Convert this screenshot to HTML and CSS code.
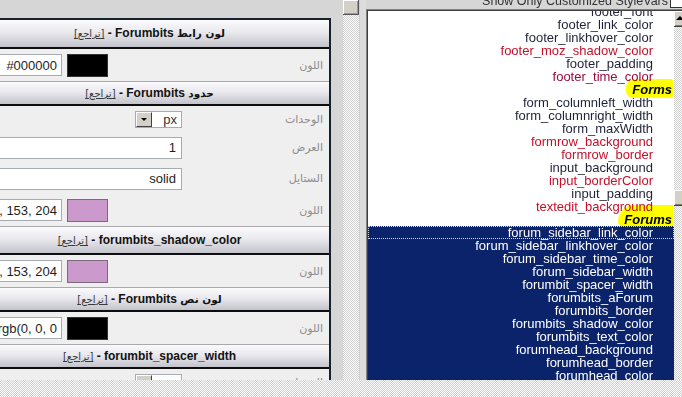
FILE: index.html
```html
<!DOCTYPE html>
<html lang="ar">
<head>
<meta charset="utf-8">
<title>StyleVars</title>
<link rel="stylesheet" href="styles.css">
</head>
<body>
<div class="frames">
  <div class="left">
    <div class="panel" dir="rtl">
      <div class="hdr hdr-tall hdr-first"><span class="ttl"><span class="ar">لون رابط</span> Forumbits</span> - <a class="undo">[تراجع]</a></div>
      <div class="row row-color">
        <div class="lbl">اللون</div>
        <div class="val val-color"><span class="swatch sw-black"></span><span class="inp inp-color"><span>#000000</span></span></div>
      </div>

      <div class="hdr"><span class="ttl"><span class="ar">حدود</span> Forumbits</span> - <a class="undo">[تراجع]</a></div>
      <div class="row row-units">
        <div class="lbl">الوحدات</div>
        <div class="val"><span class="sel"><span class="sel-btn"><span class="tri"></span></span><span class="sel-txt">px</span></span></div>
      </div>
      <div class="row row-text">
        <div class="lbl">العرض</div>
        <div class="val"><span class="inp inp-wide"><span>1</span></span></div>
      </div>
      <div class="row row-text">
        <div class="lbl">الستايل</div>
        <div class="val"><span class="inp inp-wide"><span>solid</span></span></div>
      </div>
      <div class="row row-color">
        <div class="lbl">اللون</div>
        <div class="val val-color"><span class="swatch sw-pink"></span><span class="inp inp-color"><span>rgb(204, 153, 204</span></span></div>
      </div>

      <div class="hdr hdr-tall"><span class="ttl">forumbits_shadow_color</span> - <a class="undo">[تراجع]</a></div>
      <div class="row row-color">
        <div class="lbl">اللون</div>
        <div class="val val-color"><span class="swatch sw-pink"></span><span class="inp inp-color"><span>rgb(204, 153, 204</span></span></div>
      </div>

      <div class="hdr"><span class="ttl"><span class="ar">لون نص</span> Forumbits</span> - <a class="undo">[تراجع]</a></div>
      <div class="row row-color">
        <div class="lbl">اللون</div>
        <div class="val val-color"><span class="swatch sw-black"></span><span class="inp inp-color"><span>rgb(0, 0, 0</span></span></div>
      </div>

      <div class="hdr"><span class="ttl">forumbit_spacer_width</span> - <a class="undo">[تراجع]</a></div>
      <div class="row row-units">
        <div class="lbl">الوحدات</div>
        <div class="val"><span class="sel"><span class="sel-btn"><span class="tri"></span></span><span class="sel-txt">px</span></span></div>
      </div>
    </div>
  </div>

  <div class="vscroll"><div class="thumb"></div></div>
  <div class="sep"></div>

  <div class="right">
    <div class="caption"><span class="cap-txt">Show Only Customized StyleVars</span><span class="chk"></span></div>
    <div class="listbox">
      <div class="opts">
        <div class="scroller">
          <div class="opt">footer_font</div>
          <div class="opt">footer_link_color</div>
          <div class="opt">footer_linkhover_color</div>
          <div class="opt red">footer_moz_shadow_color</div>
          <div class="opt">footer_padding</div>
          <div class="opt maroon">footer_time_color</div>
          <div class="grp"><span class="hl hl-forms">Forms</span></div>
          <div class="opt">form_columnleft_width</div>
          <div class="opt">form_columnright_width</div>
          <div class="opt">form_maxWidth</div>
          <div class="opt red">formrow_background</div>
          <div class="opt red">formrow_border</div>
          <div class="opt">input_background</div>
          <div class="opt red">input_borderColor</div>
          <div class="opt">input_padding</div>
          <div class="opt red">textedit_background</div>
          <div class="grp"><span class="hl hl-forums">Forums</span></div>
          <div class="opt sel-opt focus">forum_sidebar_link_color</div>
          <div class="opt sel-opt">forum_sidebar_linkhover_color</div>
          <div class="opt sel-opt">forum_sidebar_time_color</div>
          <div class="opt sel-opt">forum_sidebar_width</div>
          <div class="opt sel-opt">forumbit_spacer_width</div>
          <div class="opt sel-opt">forumbits_aForum</div>
          <div class="opt sel-opt">forumbits_border</div>
          <div class="opt sel-opt">forumbits_shadow_color</div>
          <div class="opt sel-opt">forumbits_text_color</div>
          <div class="opt sel-opt">forumhead_background</div>
          <div class="opt sel-opt">forumhead_border</div>
          <div class="opt sel-opt">forumhead_color</div>
          <div class="opt sel-opt">forumhead_font</div>
        </div>
      </div>
      <div class="lsb">
        <div class="sb-btn"><span class="tri-up"></span></div>
        <div class="sb-gap"></div>
        <div class="sb-thumb"></div>
      </div>
    </div>
  </div>
</div>
</body>
</html>
```

FILE: styles.css
```css
* { box-sizing: border-box; }

html, body {
  margin: 0;
  height: 100%;
}

body {
  overflow: hidden;
  font-family: "Liberation Sans", "DejaVu Sans", Arial, sans-serif;
  background: repeating-conic-gradient(#cfcfcf 0% 25%, #fdfdfd 0% 50%) 0 0 / 2px 2px;
}

.frames {
  display: flex;
  height: 380px;
}

/* ---------- left frame ---------- */
.left {
  width: 343px;
  flex: none;
  background: #d6d6d6;
  padding-top: 18px;
  display: flex;
  flex-direction: column;
  overflow: hidden;
}

.panel {
  flex: 1;
  width: 361px;
  margin-left: -30px;
  border-top: 2px solid #17212b;
  border-right: 2px solid #17212b;
  background: #efefef;
  overflow: hidden;
}

.hdr {
  height: 25px;
  border-top: 1px solid #a9a9a9;
  border-bottom: 2px solid #0d0d0d;
  background: linear-gradient(#fbfbfd, #e9e9ee 45%, #c3c3cb);
  text-align: center;
  font: bold 12px/22px "Liberation Sans", "DejaVu Sans", sans-serif;
  color: #121212;
  white-space: nowrap;
}

.hdr-tall {
  height: 29px;
  line-height: 26px;
}

.hdr-first {
  border-top: none;
}

.ar {
  font-family: "DejaVu Sans", sans-serif;
  font-size: 10.5px;
}

.undo {
  font: 10px "DejaVu Sans", sans-serif;
  font-weight: normal;
  text-decoration: underline;
  color: #3a3a3a;
}

.row {
  display: flex;
  align-items: center;
}

.row-color { height: 32px; }
.row-units { height: 26px; }
.row-text  { height: 31px; }

.lbl {
  width: 100px;
  flex: none;
  padding-right: 6px;
  font: 11px "DejaVu Sans", sans-serif;
  color: #8d8d8d;
  text-align: right;
  white-space: nowrap;
}

.val {
  flex: 1;
  display: flex;
  align-items: center;
  gap: 5px;
  padding-right: 47px;
}

.val-color {
  padding-right: 121px;
}

.swatch {
  width: 41px;
  height: 23px;
  flex: none;
  border: 1px solid #5a5a5a;
}

.sw-black { background: #000; border-color: #333; }
.sw-pink  { background: #cc99cc; border-color: #7a6a7a; }

.inp {
  display: flex;
  justify-content: flex-end;
  align-items: center;
  overflow: hidden;
  height: 22px;
  border: 1px solid #a5acb2;
  background: #fff;
  font: 13px "Liberation Sans", sans-serif;
  color: #1e1e1e;
  white-space: nowrap;
  direction: ltr;
  padding-right: 5px;
  flex: none;
}

.inp > span { flex: none; }

.inp-wide  { width: 210px; }
.inp-color { width: 90px; padding-right: 4px; }

.sel {
  direction: ltr;
  display: flex;
  width: 47px;
  height: 17px;
  border: 1px solid #a5acb2;
  background: #fff;
  flex: none;
}

.sel-btn {
  width: 16px;
  height: 15px;
  flex: none;
  background: #d4d0c8;
  border-top: 1px solid #fff;
  border-left: 1px solid #fff;
  border-right: 1px solid #404040;
  border-bottom: 1px solid #404040;
  display: flex;
  align-items: center;
  justify-content: center;
}

.tri {
  width: 0;
  height: 0;
  border-left: 3px solid transparent;
  border-right: 3px solid transparent;
  border-top: 3px solid #000;
}

.sel-txt {
  flex: 1;
  text-align: right;
  padding-right: 4px;
  font: 13px/15px "Liberation Sans", sans-serif;
  color: #333;
}

/* ---------- left frame scrollbar ---------- */
.vscroll {
  width: 16px;
  flex: none;
  background: repeating-conic-gradient(#cfcfcf 0% 25%, #fdfdfd 0% 50%) 0 0 / 2px 2px;
}

.vscroll .thumb {
  height: 15px;
  background: #d4d0c8;
  border-right: 1px solid #555;
  border-bottom: 1px solid #555;
  box-shadow: inset 1px 1px #fff, inset -1px -1px #999;
}

.sep {
  width: 7px;
  flex: none;
  background: #dcdcdc;
  border-left: 1px solid #cfcfcf;
}

/* ---------- right frame ---------- */
.right {
  flex: 1;
  min-width: 0;
  background: #d6d6d6;
  display: flex;
  flex-direction: column;
  overflow: hidden;
}

.caption {
  height: 9px;
  flex: none;
  display: flex;
  justify-content: flex-end;
  align-items: flex-start;
  overflow: hidden;
}

.cap-txt {
  margin-top: -6px;
  font: 12.5px/15px "Liberation Sans", sans-serif;
  color: #333;
  white-space: nowrap;
}

.chk {
  width: 13px;
  height: 13px;
  margin-top: -5px;
  margin-left: 2px;
  margin-right: -1px;
  flex: none;
  background: #fff;
  border: 1px solid #333;
}

.listbox {
  flex: 1;
  width: 325px;
  display: flex;
  border-top: 1px solid #808080;
  border-left: 1px solid #808080;
  box-shadow: inset 1px 1px #404040;
  padding: 1px 0 0 1px;
  overflow: hidden;
}

.opts {
  width: 306px;
  flex: none;
  background: #fff;
  overflow: hidden;
}

.scroller {
  margin-top: -6px;
}

.opt {
  height: 13px;
  line-height: 13px;
  font-size: 13px;
  text-align: right;
  padding-right: 21px;
  white-space: nowrap;
  color: #1f2238;
}

.opt.red    { color: #c4102a; }
.opt.maroon { color: #9a0a40; }

.opt.sel-opt {
  background: #0b236a;
  color: #fff;
}

.opt.focus {
  outline: 1px dotted #d8d8e8;
  outline-offset: -1px;
}

.grp {
  height: 13px;
  line-height: 13px;
  font-size: 13px;
  font-weight: bold;
  font-style: italic;
  color: #000;
  text-align: right;
  padding-right: 1px;
  white-space: nowrap;
}

.hl {
  background: #ffff00;
  mix-blend-mode: multiply;
}

.hl-forms {
  padding: 3px 1px 1px 6px;
  border-radius: 9px 2px 2px 7px;
}

.hl-forums {
  padding: 7px 1px 0 6px;
  border-radius: 18px 0 0 6px;
}

/* list scrollbar */
.lsb {
  width: 16px;
  flex: none;
  display: flex;
  flex-direction: column;
  background: repeating-conic-gradient(#cfcfcf 0% 25%, #fdfdfd 0% 50%) 0 0 / 2px 2px;
}

.sb-btn, .sb-thumb {
  height: 16px;
  flex: none;
  background: #d4d0c8;
  border-right: 1px solid #404040;
  border-bottom: 1px solid #404040;
  box-shadow: inset 1px 1px #fff, inset -1px -1px #808080;
}

.sb-btn {
  display: flex;
  justify-content: center;
  padding-top: 5px;
}

.tri-up {
  margin-left: -4px;
  width: 0;
  height: 0;
  border-left: 4px solid transparent;
  border-right: 4px solid transparent;
  border-bottom: 4px solid #000;
}

.sb-gap {
  height: 163px;
  flex: none;
}
```
